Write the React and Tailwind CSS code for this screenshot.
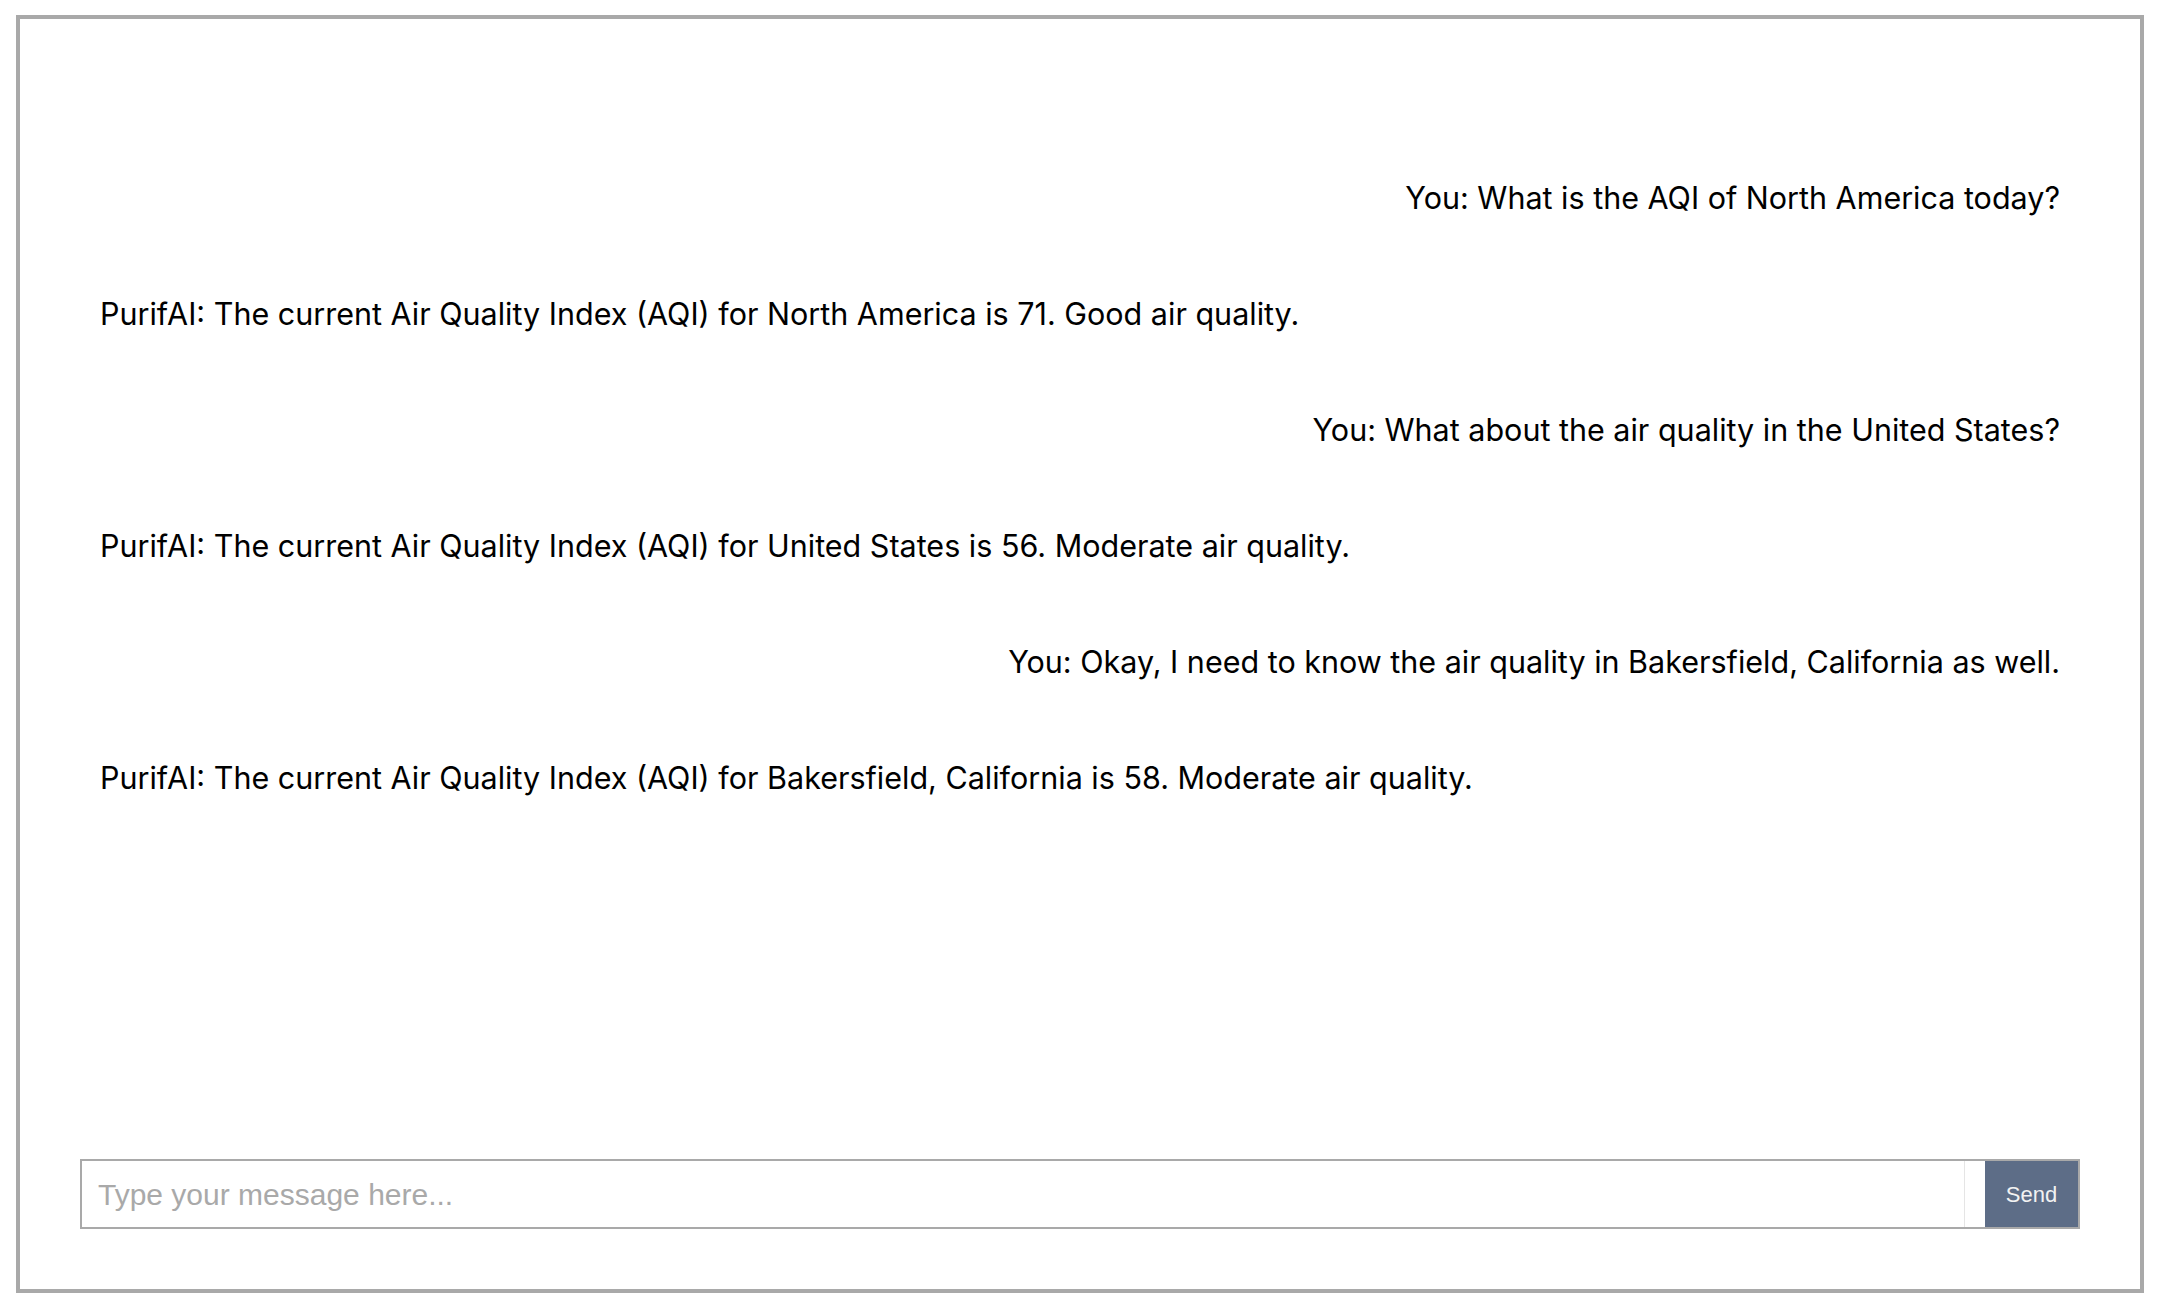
import React, { useState } from 'react';

const messages = [
  { from: 'user', text: 'You: What is the AQI of North America today?' },
  { from: 'bot', text: 'PurifAI: The current Air Quality Index (AQI) for North America is 71. Good air quality.' },
  { from: 'user', text: 'You: What about the air quality in the United States?' },
  { from: 'bot', text: 'PurifAI: The current Air Quality Index (AQI) for United States is 56. Moderate air quality.' },
  { from: 'user', text: 'You: Okay, I need to know the air quality in Bakersfield, California as well.' },
  { from: 'bot', text: 'PurifAI: The current Air Quality Index (AQI) for Bakersfield, California is 58. Moderate air quality.' },
];

export default function App() {
  const [input, setInput] = useState('');

  return (
    <div className="h-screen bg-white pt-[15px] pb-[15px] pl-[16px] pr-[14px] font-['Inter',sans-serif]">
      <div className="h-full border-4 border-[#a9a9a9] flex flex-col">
        {/* chat log */}
        <div className="flex-1 px-[80px] pt-[161px] flex flex-col gap-[80px]">
          {messages.map((m, idx) => (
            <div
              key={idx}
              className={`text-[30.5px] leading-[36px] text-black ${m.from === 'user' ? 'text-right' : 'text-left'}`}
            >
              {m.text}
            </div>
          ))}
        </div>

        {/* input row */}
        <div className="px-[60px] pb-[60px]">
          <div className="flex border-2 border-[#a9a9a9] h-[70px] font-['Liberation_Sans',Arial,sans-serif]">
            <input
              type="text"
              value={input}
              onChange={(e) => setInput(e.target.value)}
              placeholder="Type your message here..."
              className="flex-1 min-w-0 px-[16px] text-[30px] outline-none border-r border-[#e5e5e5] placeholder:text-[#a9a9a9]"
            />
            <div className="w-[20px]" />
            <button className="w-[93px] bg-[#5d6d87] text-[#f2f2f2] text-[22px]">Send</button>
          </div>
        </div>
      </div>
    </div>
  );
}
